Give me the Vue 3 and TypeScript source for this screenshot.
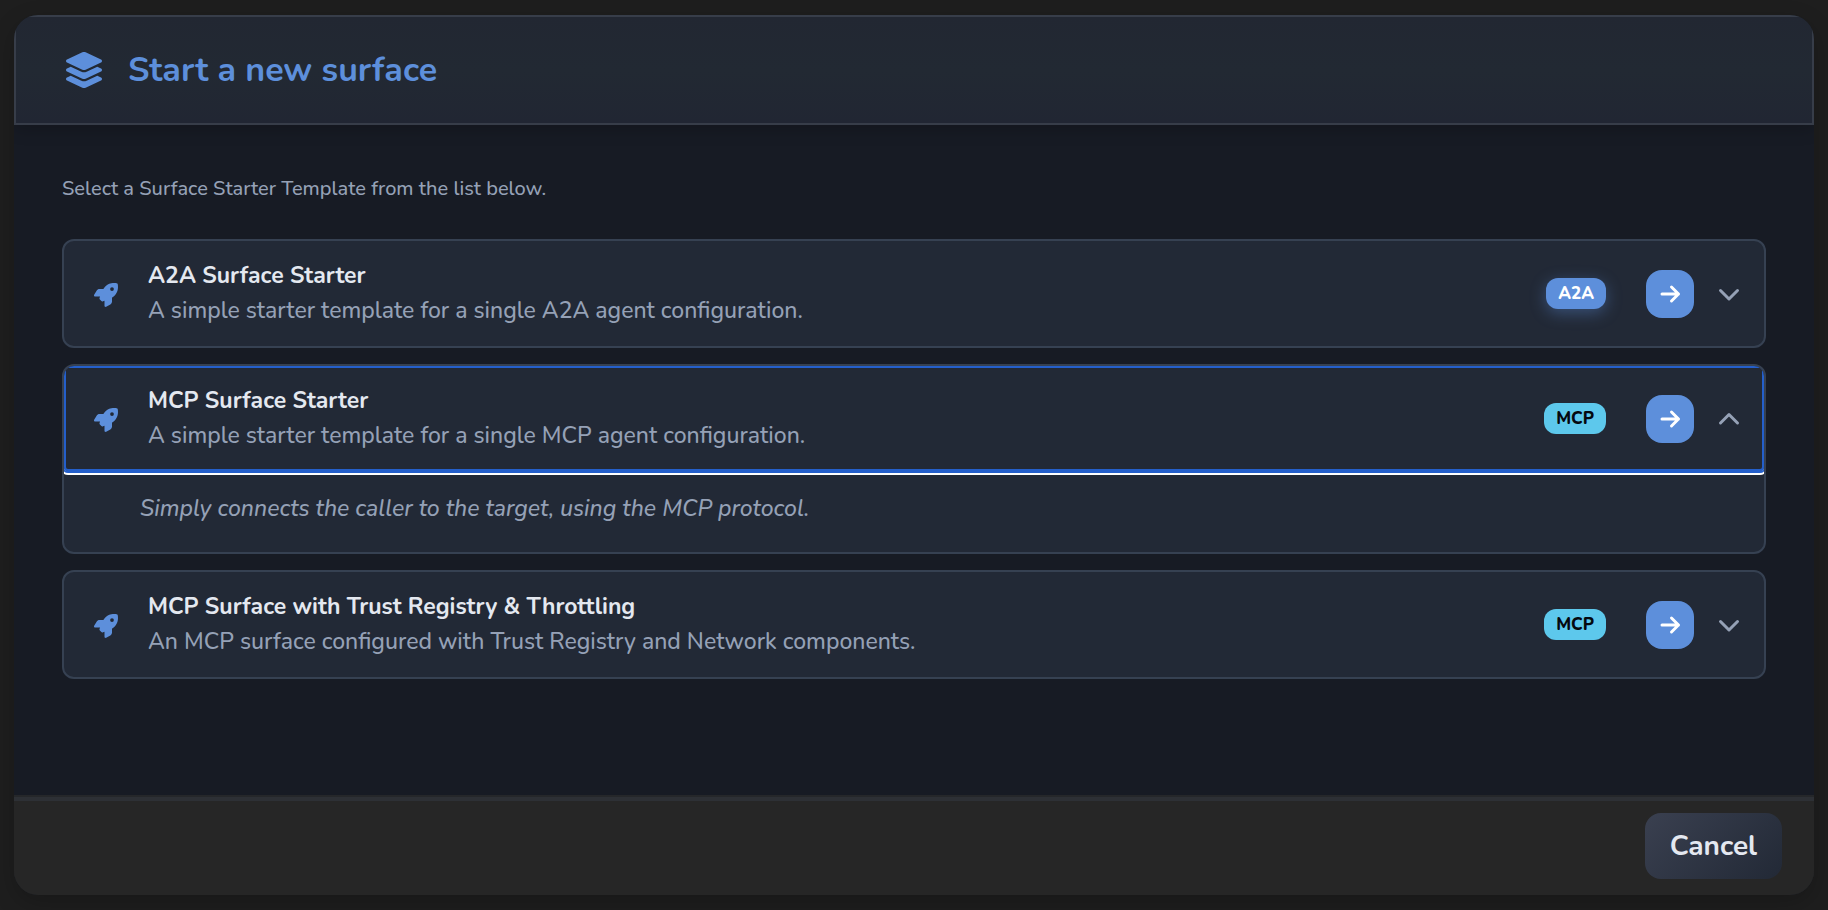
<script setup lang="ts">
import { ref } from 'vue'

interface Template {
  id: string
  title: string
  summary: string
  details: string
  protocol: 'A2A' | 'MCP'
}

const templates: Template[] = [
  {
    id: 'a2a',
    title: 'A2A Surface Starter',
    summary: 'A simple starter template for a single A2A agent configuration.',
    details: 'Simply connects the caller to the target, using the A2A protocol.',
    protocol: 'A2A',
  },
  {
    id: 'mcp',
    title: 'MCP Surface Starter',
    summary: 'A simple starter template for a single MCP agent configuration.',
    details: 'Simply connects the caller to the target, using the MCP protocol.',
    protocol: 'MCP',
  },
  {
    id: 'mcp-trust',
    title: 'MCP Surface with Trust Registry & Throttling',
    summary: 'An MCP surface configured with Trust Registry and Network components.',
    details: 'Adds Trust Registry checks and throttling to the MCP protocol.',
    protocol: 'MCP',
  },
]

const openId = ref<string | null>('mcp')

function toggle(id: string) {
  openId.value = openId.value === id ? null : id
}
</script>

<template>
  <main class="dialog" role="dialog" aria-labelledby="dialog-title">
    <header class="dialog-header">
      <svg class="layers" viewBox="32 0 512 512" aria-hidden="true">
        <path d="M264.5 5.2c14.9-6.9 32.1-6.9 47 0l218.6 101c8.5 3.9 13.9 12.4 13.9 21.8s-5.4 17.9-13.9 21.8l-218.6 101c-14.9 6.9-32.1 6.9-47 0L45.9 149.8C37.4 145.8 32 137.3 32 128s5.4-17.9 13.9-21.8L264.5 5.2zM476.9 209.6l53.2 24.6c8.5 3.9 13.9 12.4 13.9 21.8s-5.4 17.9-13.9 21.8l-218.6 101c-14.9 6.9-32.1 6.9-47 0L45.9 277.8C37.4 273.8 32 265.3 32 256s5.4-17.9 13.9-21.8l53.2-24.6 152 70.2c23.4 10.8 50.4 10.8 73.8 0l152-70.2zm-152 198.2l152-70.2 53.2 24.6c8.5 3.9 13.9 12.4 13.9 21.8s-5.4 17.9-13.9 21.8l-218.6 101c-14.9 6.9-32.1 6.9-47 0L45.9 405.8C37.4 401.8 32 393.3 32 384s5.4-17.9 13.9-21.8l53.2-24.6 152 70.2c23.4 10.8 50.4 10.8 73.8 0z" />
      </svg>
      <h1 id="dialog-title">Start a new surface</h1>
    </header>

    <section class="dialog-body">
      <p class="intro">Select a Surface Starter Template from the list below.</p>
      <ul class="cards">
        <li v-for="t in templates" :key="t.id" class="card">
          <div class="row" :class="{ active: openId === t.id }">
            <button class="summary" type="button" :aria-expanded="openId === t.id" @click="toggle(t.id)">
              <svg class="rocket" viewBox="0 0 512 512" aria-hidden="true">
                <path d="M156.6 384.9L125.7 354c-8.5-8.5-11.5-20.8-7.7-32.2c3-8.9 7-20.5 11.8-33.8L24 288c-8.6 0-16.6-4.6-20.9-12.1s-4.2-16.7 .2-24.1l52.5-88.5c13-21.9 36.5-35.3 61.9-35.3l82.3 0c2.4-4 4.8-7.7 7.2-11.3C289.1-4.1 411.1-8.1 483.9 5.3c11.6 2.1 20.6 11.2 22.8 22.8c13.4 72.9 9.3 194.8-111.4 276.7c-3.5 2.4-7.3 4.8-11.3 7.2v82.3c0 25.4-13.4 49-35.3 61.9l-88.5 52.5c-7.4 4.4-16.6 4.5-24.1 .2s-12.1-12.2-12.1-20.9V380.8c-14.1 4.9-26.4 8.9-35.7 11.9c-11.2 3.6-23.4 .5-31.8-7.8zM384 168a40 40 0 1 0 0-80 40 40 0 1 0 0 80z" />
              </svg>
              <span class="copy">
                <span class="name">{{ t.title }}</span>
                <span class="desc">{{ t.summary }}</span>
              </span>
            </button>
            <span class="badge" :class="t.protocol.toLowerCase()">{{ t.protocol }}</span>
            <button class="go" type="button" :aria-label="'Use ' + t.title">
              <svg viewBox="0 0 24 24" aria-hidden="true"><path d="M4 12h16.5M13.500 5l7 7-7 7" /></svg>
            </button>
            <button class="chevron" type="button" :aria-label="'Details of ' + t.title" @click="toggle(t.id)">
              <svg viewBox="0 0 24 24" aria-hidden="true">
                <path v-if="openId === t.id" d="M3.5 16l8.5-8.5 8.5 8.5" />
                <path v-else d="M3.5 8.5l8.5 8.5 8.5-8.5" />
              </svg>
            </button>
          </div>
          <p v-if="openId === t.id" class="details">{{ t.details }}</p>
        </li>
      </ul>
    </section>

    <footer class="dialog-footer">
      <button class="cancel" type="button">Cancel</button>
    </footer>
  </main>
</template>

<style>
body {
  margin: 0;
  background: #1e1e1e;
}
</style>

<style scoped>
.dialog {
  box-sizing: border-box;
  display: flex;
  flex-direction: column;
  min-height: calc(100vh - 30px);
  margin: 15px 14px;
  overflow: hidden;
  border-radius: 24px;
  background: #171b24;
  box-shadow: 0 8px 24px rgba(0, 0, 0, 0.2);
  color: #e4e8f0;
  font-family: Nunito, Lato, "Noto Sans", sans-serif;
}

button {
  margin: 0;
  padding: 0;
  border: 0;
  background: none;
  color: inherit;
  font: inherit;
  cursor: pointer;
}

.dialog-header {
  display: flex;
  align-items: center;
  gap: 26px;
  padding: 29px 50px;
  border: 2px solid #373d49;
  background: linear-gradient(#222732, #222933 50%, #212633);
  box-shadow: 0 4px 16px rgba(0, 0, 0, 0.2);
}

.layers {
  width: 36px;
  height: 36px;
  fill: #5d8fdb;
}

h1 {
  margin: 0;
  color: #5d8fdb;
  font-size: 34px;
  font-weight: 700;
  line-height: 48px;
}

.dialog-body {
  flex: 1;
  padding: 48px;
}

.intro {
  margin: 0 0 34px;
  color: #95a1b6;
  font-size: 20px;
  font-weight: 500;
  line-height: 32px;
}

.cards {
  display: flex;
  flex-direction: column;
  gap: 16px;
  margin: 0;
  padding: 0;
  list-style: none;
}

.card {
  overflow: hidden;
  border: 2px solid #364152;
  border-radius: 12px;
  background: #222936;
}

.row {
  position: relative;
  display: flex;
  align-items: center;
  padding-right: 23px;
}

.row.active {
  border-radius: 4px;
  box-shadow: inset 0 0 0 2px #245fcb, 0 0 0 2px #245fcb, 0 0 0 4px #fff;
}

.summary {
  display: flex;
  flex: 1;
  align-items: center;
  gap: 30px;
  padding: 17px 0 18px 30px;
  text-align: left;
}

.rocket {
  width: 24px;
  height: 24px;
  margin-top: 4px;
  fill: #5d8fdb;
}

.copy {
  display: flex;
  flex-direction: column;
  font-size: 23px;
  font-weight: 500;
  line-height: 35px;
}

.name {
  font-weight: 700;
}

.desc {
  color: #95a1b6;
}

.badge {
  padding: 0 12px;
  border-radius: 12px;
  font-size: 17px;
  font-weight: 800;
  line-height: 31px;
}

.badge.a2a {
  background: #5d8fdb;
  box-shadow: 0 4px 16px rgba(93, 143, 219, 0.4);
  color: #fff;
}

.badge.mcp {
  background: #5dc8ec;
  color: #05090f;
}

.go {
  display: grid;
  place-items: center;
  width: 48px;
  height: 48px;
  margin: 0 23px 0 40px;
  border-radius: 16px;
  background: #5d8fdb;
}

.go svg,
.chevron svg {
  display: block;
  width: 24px;
  height: 24px;
  fill: none;
  stroke-linecap: round;
  stroke-linejoin: round;
  stroke-width: 3;
}

.go svg {
  stroke: #fff;
}

.chevron svg {
  stroke: #95a1b6;
}

.details {
  margin: 0;
  padding: 20px 76px 26px;
  color: #95a1b6;
  font-size: 23px;
  font-style: italic;
  font-weight: 500;
  line-height: 35px;
}

.dialog-footer {
  display: flex;
  justify-content: flex-end;
  padding: 12px 32px 16px;
  border-top: 4px solid #2d3035;
  background: #262626;
  box-shadow: 0 -2px #25272a;
}

.cancel {
  padding: 0 25px;
  border-radius: 16px;
  background: linear-gradient(135deg, #3a4050, #222936);
  font-size: 28px;
  font-weight: 700;
  line-height: 66px;
}
</style>
